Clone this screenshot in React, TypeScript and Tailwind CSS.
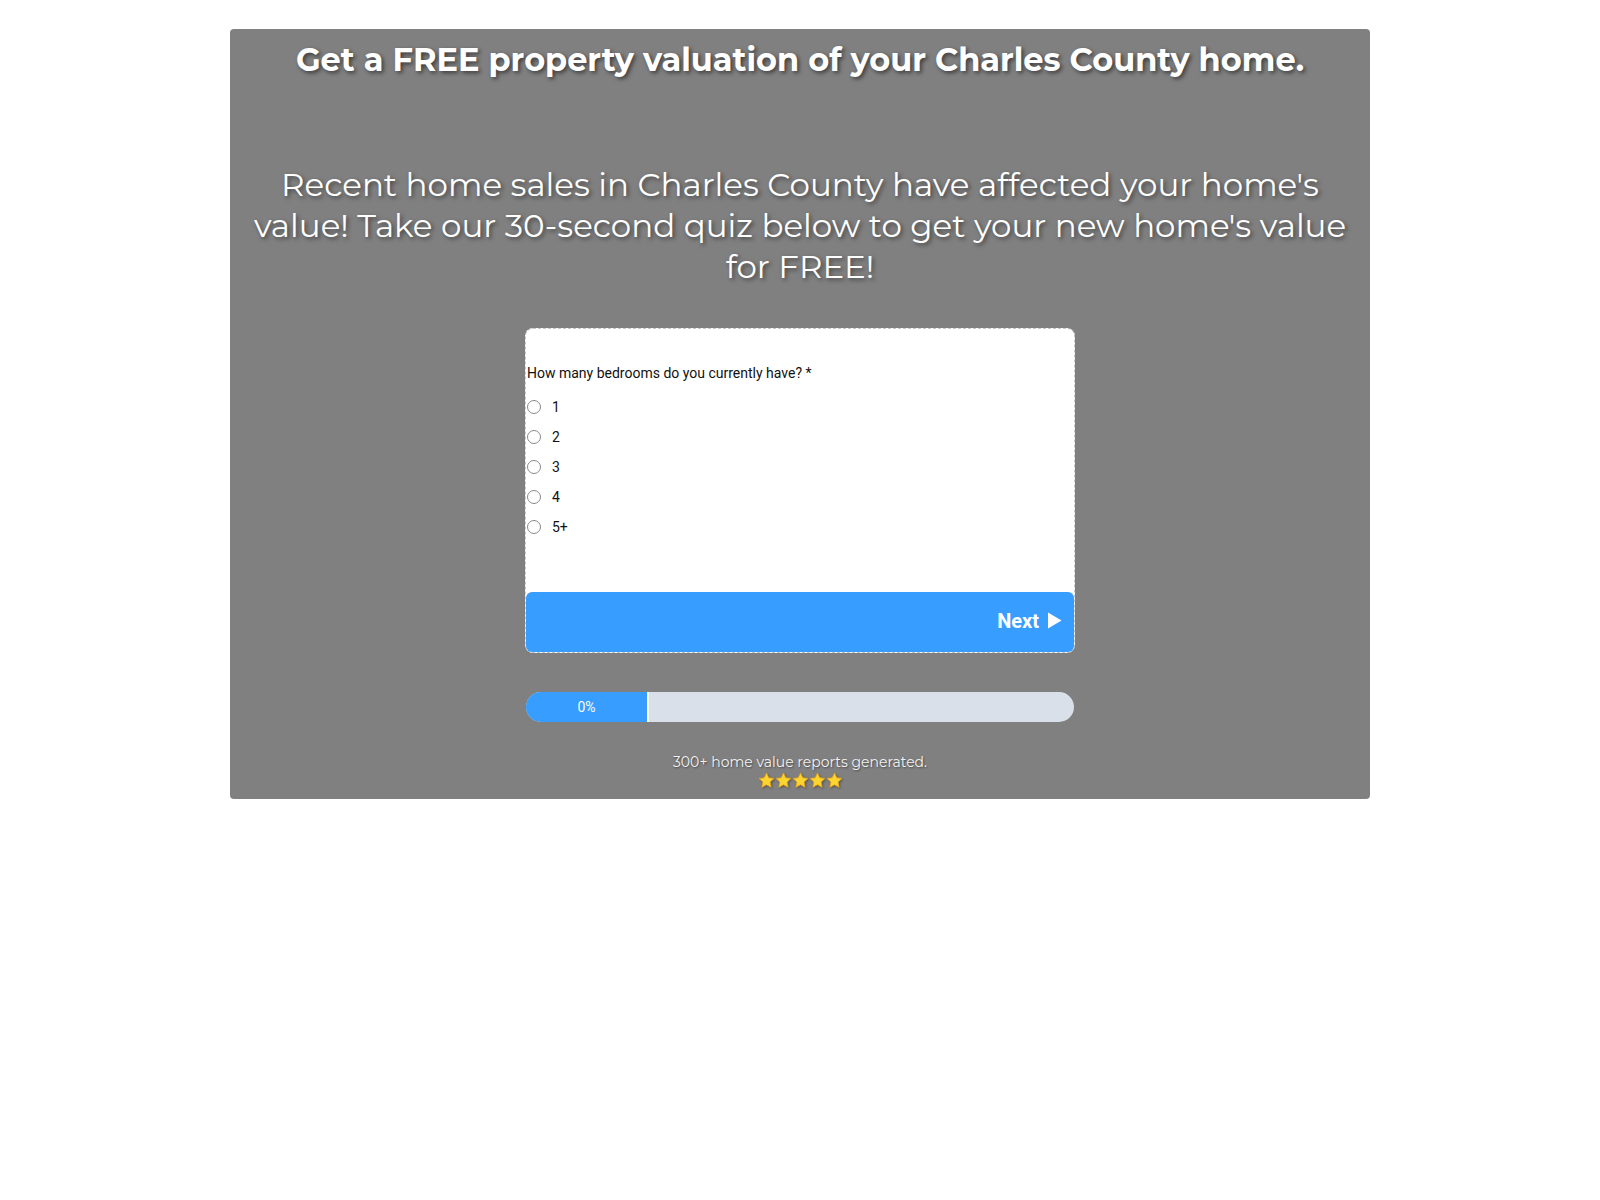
import React from "react";

const Star = () => (
  <svg width="17" height="17" viewBox="0 0 24 24" className="[filter:drop-shadow(1px_1px_1px_rgba(0,0,0,0.35))]">
    <path
      d="M12 1.5l3.2 6.7 7.3.9-5.4 5.1 1.4 7.3L12 18l-6.5 3.5 1.4-7.3-5.4-5.1 7.3-.9z"
      fill="#fdd531"
      stroke="#e8a317"
      strokeWidth="1.2"
      strokeLinejoin="round"
    />
  </svg>
);

const options = ["1", "2", "3", "4", "5+"];

export default function App() {
  return (
    <div className="w-full bg-white min-h-[1200px] pt-[29px]">
      <div className="mx-auto w-[1140px] bg-[#808080] rounded-[4px] flex flex-col items-center pt-[11px] pb-[10px]">
        <h1 className="font-['Montserrat','Open_Sans',sans-serif] font-bold text-[32px] leading-[40px] text-white text-center [text-shadow:2px_2px_4px_rgba(0,0,0,0.55)]">
          Get a FREE property valuation of your Charles County home.
        </h1>
        <p className="mt-[84px] font-['Montserrat','Open_Sans',sans-serif] text-[32.5px] leading-[41px] text-white text-center [text-shadow:2px_2px_4px_rgba(0,0,0,0.5)]">
          Recent home sales in Charles County have affected your home's
          <br />
          value! Take our 30-second quiz below to get your new home's value
          <br />
          for FREE!
        </p>

        <div className="mt-[41px] w-[550px] bg-white rounded-[8px] border border-dashed border-[#c9c9c9] flex flex-col font-['Roboto',sans-serif]">
          <div className="pt-[34px] pl-[1px] text-[14px] leading-[20px] text-[#111]">
            How many bedrooms do you currently have? *
          </div>
          <div className="mt-[9px] flex flex-col">
            {options.map((o) => (
              <label key={o} className="h-[30px] flex items-center pl-[1px] text-[14px] text-[#111]">
                <span className="w-[14px] h-[14px] rounded-full border border-[#8a8a8a] bg-white" />
                <span className="ml-[11px]">{o}</span>
              </label>
            ))}
          </div>
          <button className="mt-[50px] h-[60px] w-full bg-[#379dff] rounded-[6px] flex items-center justify-end pr-[12px] pb-[3px] text-white font-bold text-[20px]">
            <span>Next</span>
            <svg width="15" height="17" viewBox="0 0 15 17" className="ml-[8px]">
              <path d="M1 0.5L14.5 8.5L1 16.5Z" fill="white" />
            </svg>
          </button>
        </div>

        <div className="mt-[39px] w-[548px] h-[30px] rounded-full bg-[#d9e0e9] flex overflow-hidden">
          <div className="w-[123px] h-full bg-[#379dff] border-r-2 border-white flex items-center justify-center font-['Roboto',sans-serif] text-[14px] text-white">
            0%
          </div>
        </div>

        <div className="mt-[31px] font-['Montserrat','Open_Sans',sans-serif] text-[14px] leading-[18px] text-[#f2f2f2] [text-shadow:1px_1px_2px_rgba(0,0,0,0.45)]">
          300+ home value reports generated.
        </div>
        <div className="mt-[1px] flex">
          {[0, 1, 2, 3, 4].map((i) => (
            <Star key={i} />
          ))}
        </div>
      </div>
    </div>
  );
}
